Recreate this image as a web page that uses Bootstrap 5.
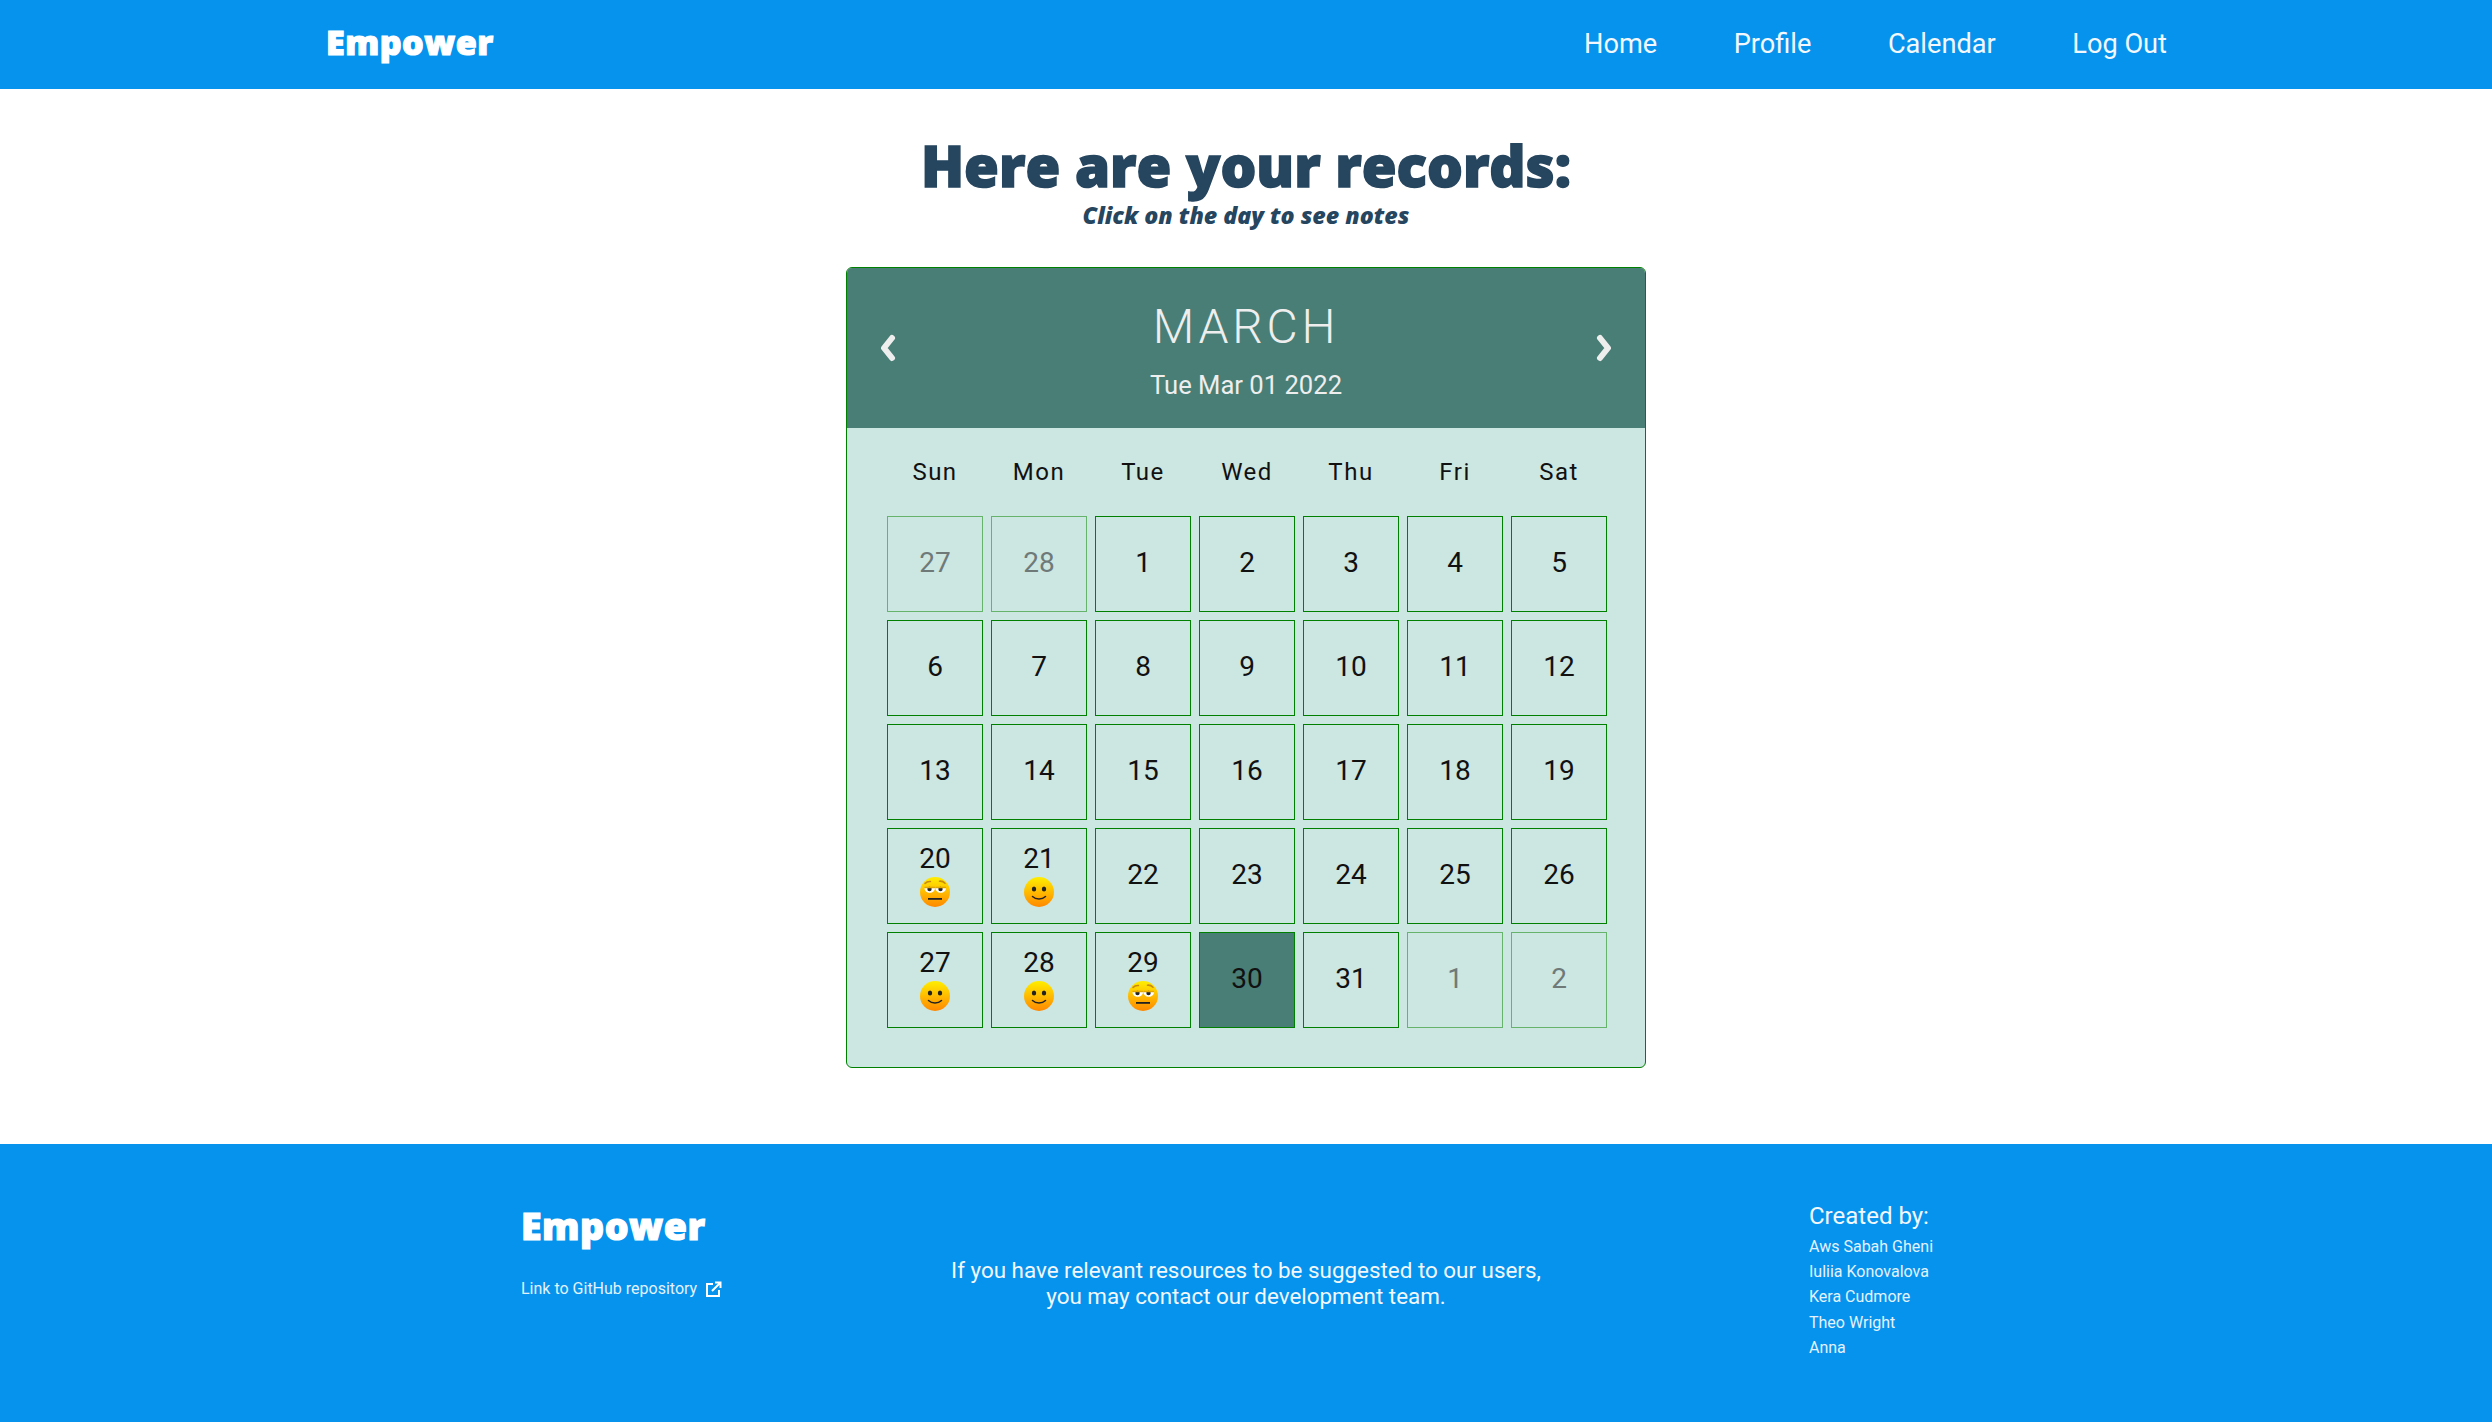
<!DOCTYPE html>
<html lang="en">
<head>
  <meta charset="UTF-8" />
  <meta name="viewport" content="width=device-width, initial-scale=1.0"/>
  <title>Empower</title>
  <link href="https://cdn.jsdelivr.net/npm/bootstrap@5.3.0/dist/css/bootstrap.min.css" rel="stylesheet" />
  <style>
    body {
      font-family: Roboto, "Liberation Sans", sans-serif;
      background: #fff;
      min-height: 1422px;
    }

    .top-bar {
      background: #0593ed;
      height: 89px;
      padding: 0 325px 0 326px;
    }

    .top-links {
      gap: 76.5px;
    }

    .logo-text {
      font-family: "Open Sans", "DejaVu Sans", sans-serif;
      font-weight: 800;
      color: #fff;
      letter-spacing: .5px;
      -webkit-text-stroke: 1.2px #fff;
    }

    .top-bar .logo-text {
      font-size: 34px;
      line-height: 1;
      margin-top: -5px;
    }

    .top-link {
      color: #f2f8fd;
      font-size: 27.2px;
      text-decoration: none;
    }

    .page-title {
      font-family: "Open Sans", "DejaVu Sans", sans-serif;
      font-weight: 800;
      font-size: 56.4px;
      line-height: 1;
      color: #26455e;
      -webkit-text-stroke: 1.5px #26455e;
      margin: 49px 0 0;
    }

    .page-sub {
      font-family: "Open Sans", sans-serif;
      font-weight: 800;
      font-style: italic;
      font-size: 23.2px;
      line-height: 1;
      color: #26455e;
      margin: 10px 0 39px;
    }

    .cal-box {
      width: 800px;
      border: 1px solid #008000;
      border-radius: 6px;
      background: #cce6e2;
      overflow: hidden;
      margin-bottom: 76px;
    }

    .cal-head {
      height: 160px;
      background: #487e76;
      color: #eee;
      padding: 0 32px;
    }

    .cal-title {
      padding-top: 6px;
    }

    .cal-month {
      font-size: 48px;
      font-weight: 300;
      letter-spacing: 3.8px;
      line-height: 1;
    }

    .cal-date {
      font-size: 25.6px;
      font-weight: 400;
      line-height: 1;
      margin-top: 22px;
    }

    .cal-body {
      padding: 0 0 39px 40px;
    }

    .day-grid {
      display: grid;
      grid-template-columns: repeat(7, 96px);
      gap: 8px;
    }

    .week-row {
      height: 88px;
      font-size: 24px;
      letter-spacing: 1.5px;
      color: #111;
      align-items: center;
      text-align: center;
    }

    .day-cell {
      height: 96px;
      border: 1px solid #008000;
      font-size: 28px;
      line-height: 1.1;
      color: #111;
    }

    .day-cell svg {
      display: block;
      margin-top: 2px;
    }

    .day-cell.other-month {
      border-color: #66b36b;
      color: #6f7a78;
    }

    .day-cell.today {
      background: #487e76;
    }

    .site-foot {
      background: #0593ed;
      height: 278px;
      color: #f2f8fd;
      padding-left: 521px;
    }

    .foot-left {
      width: 325px;
      padding-top: 63px;
    }

    .foot-left .logo-text {
      font-size: 37.5px;
      line-height: 1;
    }

    .foot-link {
      color: #e4f2fd;
      font-size: 16px;
      text-decoration: none;
      margin-top: 33px;
    }

    .foot-mid {
      font-size: 22.4px;
      line-height: 26px;
      text-align: center;
      width: 800px;
      padding-top: 113px;
    }

    .foot-right {
      padding: 57px 0 0 163px;
    }

    .foot-right h6 {
      font-size: 24px;
      font-weight: 400;
      line-height: 30px;
      margin: 0 0 3px;
    }

    .foot-right div {
      font-size: 16px;
      line-height: 25.4px;
      color: #e4f2fd;
    }
  </style>
</head>
<body>

  <svg width="0" height="0" class="position-absolute">
    <defs>
      <linearGradient id="faceFill" x1="0" y1="0" x2="0" y2="1">
        <stop offset="0" stop-color="#ffee00"/>
        <stop offset="1" stop-color="#ff8800"/>
      </linearGradient>
      <symbol id="smileFace" viewBox="0 0 30 30">
        <circle cx="15" cy="15" r="15" fill="url(#faceFill)"/>
        <ellipse cx="10" cy="12" rx="2.2" ry="2.6" fill="#222"/>
        <ellipse cx="20" cy="12" rx="2.2" ry="2.6" fill="#222"/>
        <path d="M8.5 19.5c3.5 3.4 9.5 3.4 13 0" fill="none" stroke="#222" stroke-width="1.5" stroke-linecap="round"/>
      </symbol>
      <symbol id="mehFace" viewBox="0 0 30 30">
        <circle cx="15" cy="15" r="15" fill="url(#faceFill)"/>
        <path d="M5 6.5c1.5-1.6 3.5-2.2 5.5-2M19.5 4.2c2-.2 4 .5 5.5 2" fill="none" stroke="#c98a10" stroke-width="1.6" stroke-linecap="round"/>
        <path d="M4.5 11h10.500c0 3-2.300 4.800-5.200 4.800S4.500 14 4.500 11zM15.500 11h10.500c0 3-2.300 4.800-5.200 4.800s-5.300-1.800-5.300-4.800z" fill="#fff"/>
        <circle cx="9.500" cy="12" r="2.200" fill="#222"/>
        <circle cx="20.500" cy="12" r="2.200" fill="#222"/>
        <path d="M4.500 10.500h10.500M15.500 10.500h10.500" stroke="#e0a800" stroke-width="1.300"/>
        <rect x="8" y="21" width="14" height="1.800" fill="#222"/>
      </symbol>
    </defs>
  </svg>

  <nav class="top-bar d-flex align-items-center justify-content-between">
    <span class="logo-text">Empower</span>
    <div class="top-links d-flex">
      <a class="top-link" href="#">Home</a>
      <a class="top-link" href="#">Profile</a>
      <a class="top-link" href="#">Calendar</a>
      <a class="top-link" href="#">Log Out</a>
    </div>
  </nav>

  <main class="d-flex flex-column align-items-center">
    <h1 class="page-title text-center">Here are your records:</h1>
    <p class="page-sub text-center">Click on the day to see notes</p>

    <div class="cal-box">
      <div class="cal-head d-flex align-items-center justify-content-between">
        <svg width="18" height="28" viewBox="0 0 18 28"><path d="M13 4 5 14l8 10" fill="none" stroke="#eee" stroke-width="6" stroke-linecap="round" stroke-linejoin="round"/></svg>
        <div class="cal-title text-center">
          <div class="cal-month">MARCH</div>
          <div class="cal-date">Tue Mar 01 2022</div>
        </div>
        <svg width="18" height="28" viewBox="0 0 18 28"><path d="m5 4 8 10-8 10" fill="none" stroke="#eee" stroke-width="6" stroke-linecap="round" stroke-linejoin="round"/></svg>
      </div>
      <div class="cal-body">
        <div class="day-grid week-row" id="weekRow"></div>
        <div class="day-grid" id="dayGrid"></div>
      </div>
    </div>
  </main>

  <footer class="site-foot d-flex">
    <div class="foot-left">
      <div class="logo-text">Empower</div>
      <a class="foot-link d-flex align-items-center gap-2" href="#">Link to GitHub repository
        <svg width="17" height="17" viewBox="0 0 17 17"><path d="M8 3H2v12h12V9" fill="none" stroke="#fff" stroke-width="2"/><path d="M7 10 15 2M10 1.500h5.500V7" fill="none" stroke="#fff" stroke-width="2"/></svg>
      </a>
    </div>
    <div class="foot-mid">If you have relevant resources to be suggested to our users,<br>you may contact our development team.</div>
    <div class="foot-right">
      <h6>Created by:</h6>
      <div>Aws Sabah Gheni</div>
      <div>Iuliia Konovalova</div>
      <div>Kera Cudmore</div>
      <div>Theo Wright</div>
      <div>Anna</div>
    </div>
  </footer>

  <script>
    const weekRow = document.getElementById('weekRow');
    ['Sun', 'Mon', 'Tue', 'Wed', 'Thu', 'Fri', 'Sat'].forEach(d => {
      weekRow.innerHTML += `<div>${d}</div>`;
    });

    // moods saved on some of the days
    const moods = { 20: 'mehFace', 21: 'smileFace', 27: 'smileFace', 28: 'smileFace', 29: 'mehFace' };
    const days = [[27, 1], [28, 1]];
    for (let i = 1; i <= 31; i++) days.push([i, 0]);
    days.push([1, 1], [2, 1]);

    const dayGrid = document.getElementById('dayGrid');
    days.forEach(([n, other]) => {
      const mood = !other && moods[n];
      const face = mood ? `<svg width="30" height="30"><use href="#${mood}"/></svg>` : '';
      const cls = (other ? ' other-month' : '') + (n === 30 ? ' today' : '');
      dayGrid.innerHTML += `<div class="day-cell d-flex flex-column align-items-center justify-content-center${cls}">${n}${face}</div>`;
    });
  </script>
  <script src="https://cdn.jsdelivr.net/npm/bootstrap@5.3.0/dist/js/bootstrap.bundle.min.js"></script>
</body>
</html>
